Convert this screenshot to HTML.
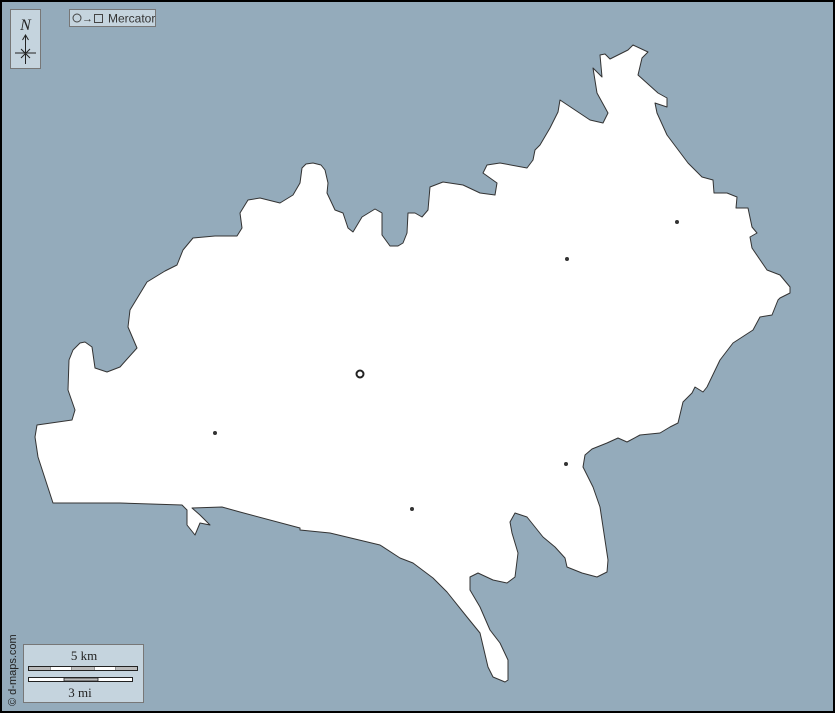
<!DOCTYPE html>
<html><head><meta charset="utf-8"><style>
html,body{margin:0;padding:0;}
body{width:835px;height:713px;overflow:hidden;background:#000;font-family:"Liberation Sans",sans-serif;}
</style></head><body>
<svg width="835" height="713" xmlns="http://www.w3.org/2000/svg" style="position:absolute;left:0;top:0">
<rect x="2" y="2" width="831" height="709" fill="#94abbb"/>
<path fill="#fff" stroke="#333" stroke-width="1" stroke-linejoin="round" d="M37,425 L72,420 L75,410 L68,390 L69,360 L73,350 L80,343 L85,342 L92,347 L95,368 L107,372 L120,367 L137,348 L128,327 L130,310 L147,282 L165,271 L177,265 L183,250 L193,238 L215,236 L237,236 L242,228 L240,213 L248,200 L260,198 L280,203 L293,195 L300,183 L302,168 L306,164 L313,163 L321,165 L325,170 L328,183 L327,193 L335,210 L343,213 L348,228 L353,232 L362,217 L375,209 L382,213 L382,235 L390,246 L398,246 L403,243 L407,233 L408,213 L415,213 L422,217 L428,210 L430,187 L443,182 L463,185 L480,193 L495,195 L497,183 L483,173 L487,165 L500,163 L527,168 L533,160 L535,150 L540,145 L550,128 L558,112 L560,100 L575,110 L590,120 L603,123 L608,113 L597,93 L593,68 L602,77 L600,55 L605,54 L610,59 L628,50 L633,45 L648,52 L642,58 L638,75 L658,93 L667,98 L667,107 L655,103 L657,113 L667,135 L688,163 L702,177 L713,180 L714,193 L727,193 L737,197 L736,208 L748,208 L752,227 L757,233 L750,237 L752,248 L767,270 L780,275 L790,287 L790,293 L780,298 L778,300 L772,315 L760,317 L753,330 L733,343 L720,360 L707,387 L703,392 L695,387 L692,393 L683,402 L678,423 L670,427 L660,433 L640,435 L627,442 L618,438 L607,443 L592,449 L585,455 L583,467 L593,487 L600,507 L608,560 L607,572 L597,577 L582,573 L567,567 L565,558 L555,547 L543,537 L527,517 L515,513 L510,522 L512,533 L518,553 L515,577 L507,583 L493,580 L478,573 L470,577 L470,590 L480,607 L490,630 L500,643 L508,660 L508,680 L505,682 L493,677 L488,667 L480,633 L467,617 L447,592 L433,578 L413,563 L400,558 L380,545 L330,533 L300,530 L300,528 L240,512 L222,507 L192,508 L200,515 L210,525 L200,523 L195,535 L187,525 L187,510 L182,505 L120,503 L53,503 L38,457 L35,437 Z"/>
<g fill="#333"><circle cx="567" cy="259" r="2"/><circle cx="677" cy="222" r="2"/><circle cx="215" cy="433" r="2"/><circle cx="566" cy="464" r="2"/><circle cx="412" cy="509" r="2"/></g>
<circle cx="360" cy="374" r="3.5" fill="none" stroke="#222" stroke-width="2"/>
<rect x="10.5" y="9.5" width="30" height="59" fill="#c5d4de" stroke="#777"/>
<text x="25.5" y="30" font-family="Liberation Serif" font-style="italic" font-size="16" text-anchor="middle" fill="#222">N</text>
<path d="M25.5,36 V64 M22.5,40 L25.5,35 L28.5,40 M15,53 H36 M21,49 L30,58 M30,49 L21,58" stroke="#222" stroke-width="1" fill="none"/>
<rect x="69.5" y="9.5" width="86" height="17" fill="#c5d4de" stroke="#777"/>
<circle cx="77" cy="18" r="4" fill="none" stroke="#444"/>
<text x="82" y="22" font-size="11" fill="#333">→</text>
<rect x="94.5" y="14.5" width="8" height="8" fill="none" stroke="#444"/>
<text x="108" y="22.5" font-size="12" fill="#333">Mercator</text>
<rect x="23.5" y="644.5" width="120" height="58" fill="#c5d4de" stroke="#777"/>
<text x="84" y="660" font-family="Liberation Serif" font-size="13" text-anchor="middle" fill="#222">5 km</text>
<rect x="28.5" y="666.5" width="109" height="4" fill="#fff" stroke="#222"/>
<path d="M50,666 V671 M72,666 V671 M94,666 V671 M116,666 V671" stroke="#222"/>
<rect x="29" y="667" width="21" height="3" fill="#bbb"/><rect x="72" y="667" width="22" height="3" fill="#bbb"/><rect x="116" y="667" width="21" height="3" fill="#bbb"/>
<rect x="28.5" y="677.5" width="104" height="4" fill="#fff" stroke="#222"/>
<rect x="64" y="678" width="34" height="3" fill="#bbb" stroke="#222" stroke-width="0.8"/>
<text x="80" y="697" font-family="Liberation Serif" font-size="13" text-anchor="middle" fill="#222">3 mi</text>
<text transform="translate(16,706) rotate(-90)" font-size="11" fill="#222">© d-maps.com</text>
</svg>
</body></html>
